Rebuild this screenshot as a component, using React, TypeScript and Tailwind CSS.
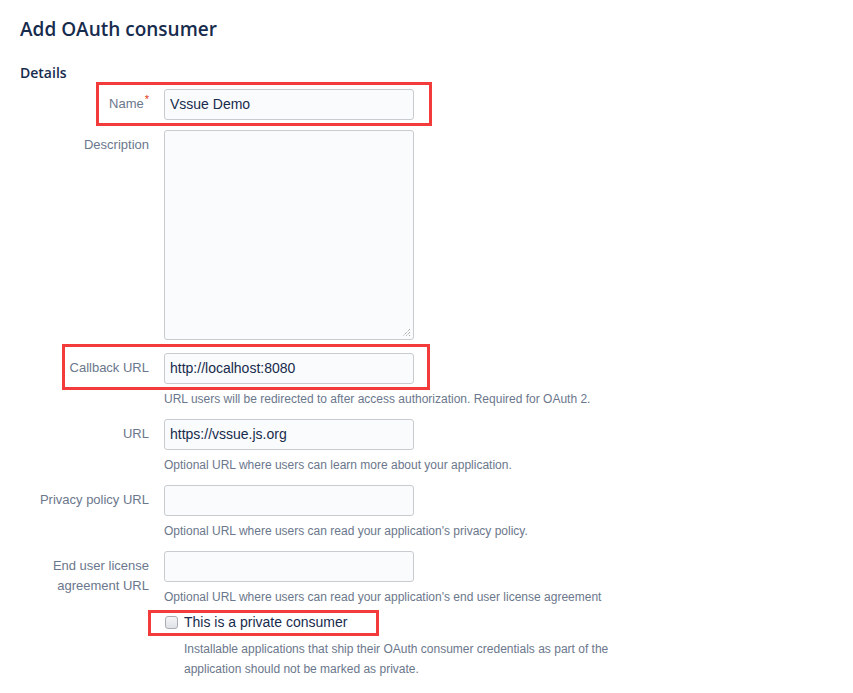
import React from "react";

const font = { fontFamily: '"Liberation Sans", Arial, sans-serif' };
const headFont = { fontFamily: '"Open Sans", "Liberation Sans", Arial, sans-serif' };

function Label({ children, required }: { children: React.ReactNode; required?: boolean }) {
  return (
    <div className="w-[129px] shrink-0 pt-[5px] text-right text-[13px] leading-[20px] text-[#6B778C]">
      {children}
      {required && <span className="relative -top-[5px] ml-[1px] text-[11px] text-[#DE350B]">*</span>}
    </div>
  );
}

function TextInput({ value }: { value?: string }) {
  return (
    <div className="flex h-[31px] w-[250px] shrink-0 items-center rounded-[3px] border border-[#c8cbd0] bg-[#FAFBFC] px-[5px] text-[14px] text-[#172B4D]">
      {value}
    </div>
  );
}

function Help({ children }: { children: React.ReactNode }) {
  return <div className="ml-[144px] mt-[5px] text-[12px] leading-[20px] text-[#6B778C]">{children}</div>;
}

export default function App() {
  return (
    <div style={font} className="relative min-h-[693px] w-[853px] bg-white pl-[20px] pt-[15px]">
      <h1 style={headFont} className="text-[19px] font-semibold leading-[28px] text-[#172B4D]">Add OAuth consumer</h1>
      <h2 style={headFont} className="mt-[20px] text-[14px] font-semibold leading-[20px] text-[#172B4D]">Details</h2>

      <div className="mt-[6px] flex h-[31px] gap-[15px]">
        <Label required>Name</Label>
        <TextInput value="Vssue Demo" />
      </div>

      <div className="mt-[10px] flex gap-[15px]">
        <Label>Description</Label>
        <div className="relative h-[210px] w-[250px] rounded-[3px] border border-[#c8cbd0] bg-[#FAFBFC]">
          <svg className="absolute bottom-[2px] right-[2px]" width="9" height="9" viewBox="0 0 9 9">
            <path d="M8 1 L1 8 M8 4 L4 8 M8 7 L7 8" stroke="#888" strokeWidth="1" strokeDasharray="1 1" />
          </svg>
        </div>
      </div>

      <div className="mt-[13px] flex h-[31px] gap-[15px]">
        <Label>Callback URL</Label>
        <TextInput value="http://localhost:8080" />
      </div>
      <Help>URL users will be redirected to after access authorization. Required for OAuth 2.</Help>

      <div className="mt-[10px] flex h-[31px] gap-[15px]">
        <Label>URL</Label>
        <TextInput value="https://vssue.js.org" />
      </div>
      <Help>Optional URL where users can learn more about your application.</Help>

      <div className="mt-[10px] flex h-[31px] gap-[15px]">
        <Label>Privacy policy URL</Label>
        <TextInput />
      </div>
      <Help>Optional URL where users can read your application's privacy policy.</Help>

      <div className="mt-[10px] flex h-[31px] gap-[15px]">
        <Label>
          End user license
          <br />
          agreement URL
        </Label>
        <TextInput />
      </div>
      <Help>Optional URL where users can read your application's end user license agreement</Help>

      <div className="ml-[145px] mt-[5px] flex h-[20px] items-center gap-[6px]">
        <span className="h-[13px] w-[13px] rounded-[3px] border border-[#a9adb3] bg-gradient-to-b from-[#f4f5f7] to-[#dfe1e6]" />
        <span className="text-[14px] leading-[20px] text-[#172B4D]">This is a private consumer</span>
      </div>
      <div className="ml-[164px] mt-[7px] w-[430px] text-[12px] leading-[20px] text-[#6B778C]">
        Installable applications that ship their OAuth consumer credentials as part of the application should not be marked as private.
      </div>

      <div className="pointer-events-none absolute left-[96px] top-[82px] h-[44px] w-[336px] border-[3px] border-[#f33b3b]" />
      <div className="pointer-events-none absolute left-[62px] top-[344px] h-[46px] w-[368px] border-[3px] border-[#f33b3b]" />
      <div className="pointer-events-none absolute left-[148px] top-[610px] h-[26px] w-[231px] border-[3px] border-[#f33b3b]" />
    </div>
  );
}
